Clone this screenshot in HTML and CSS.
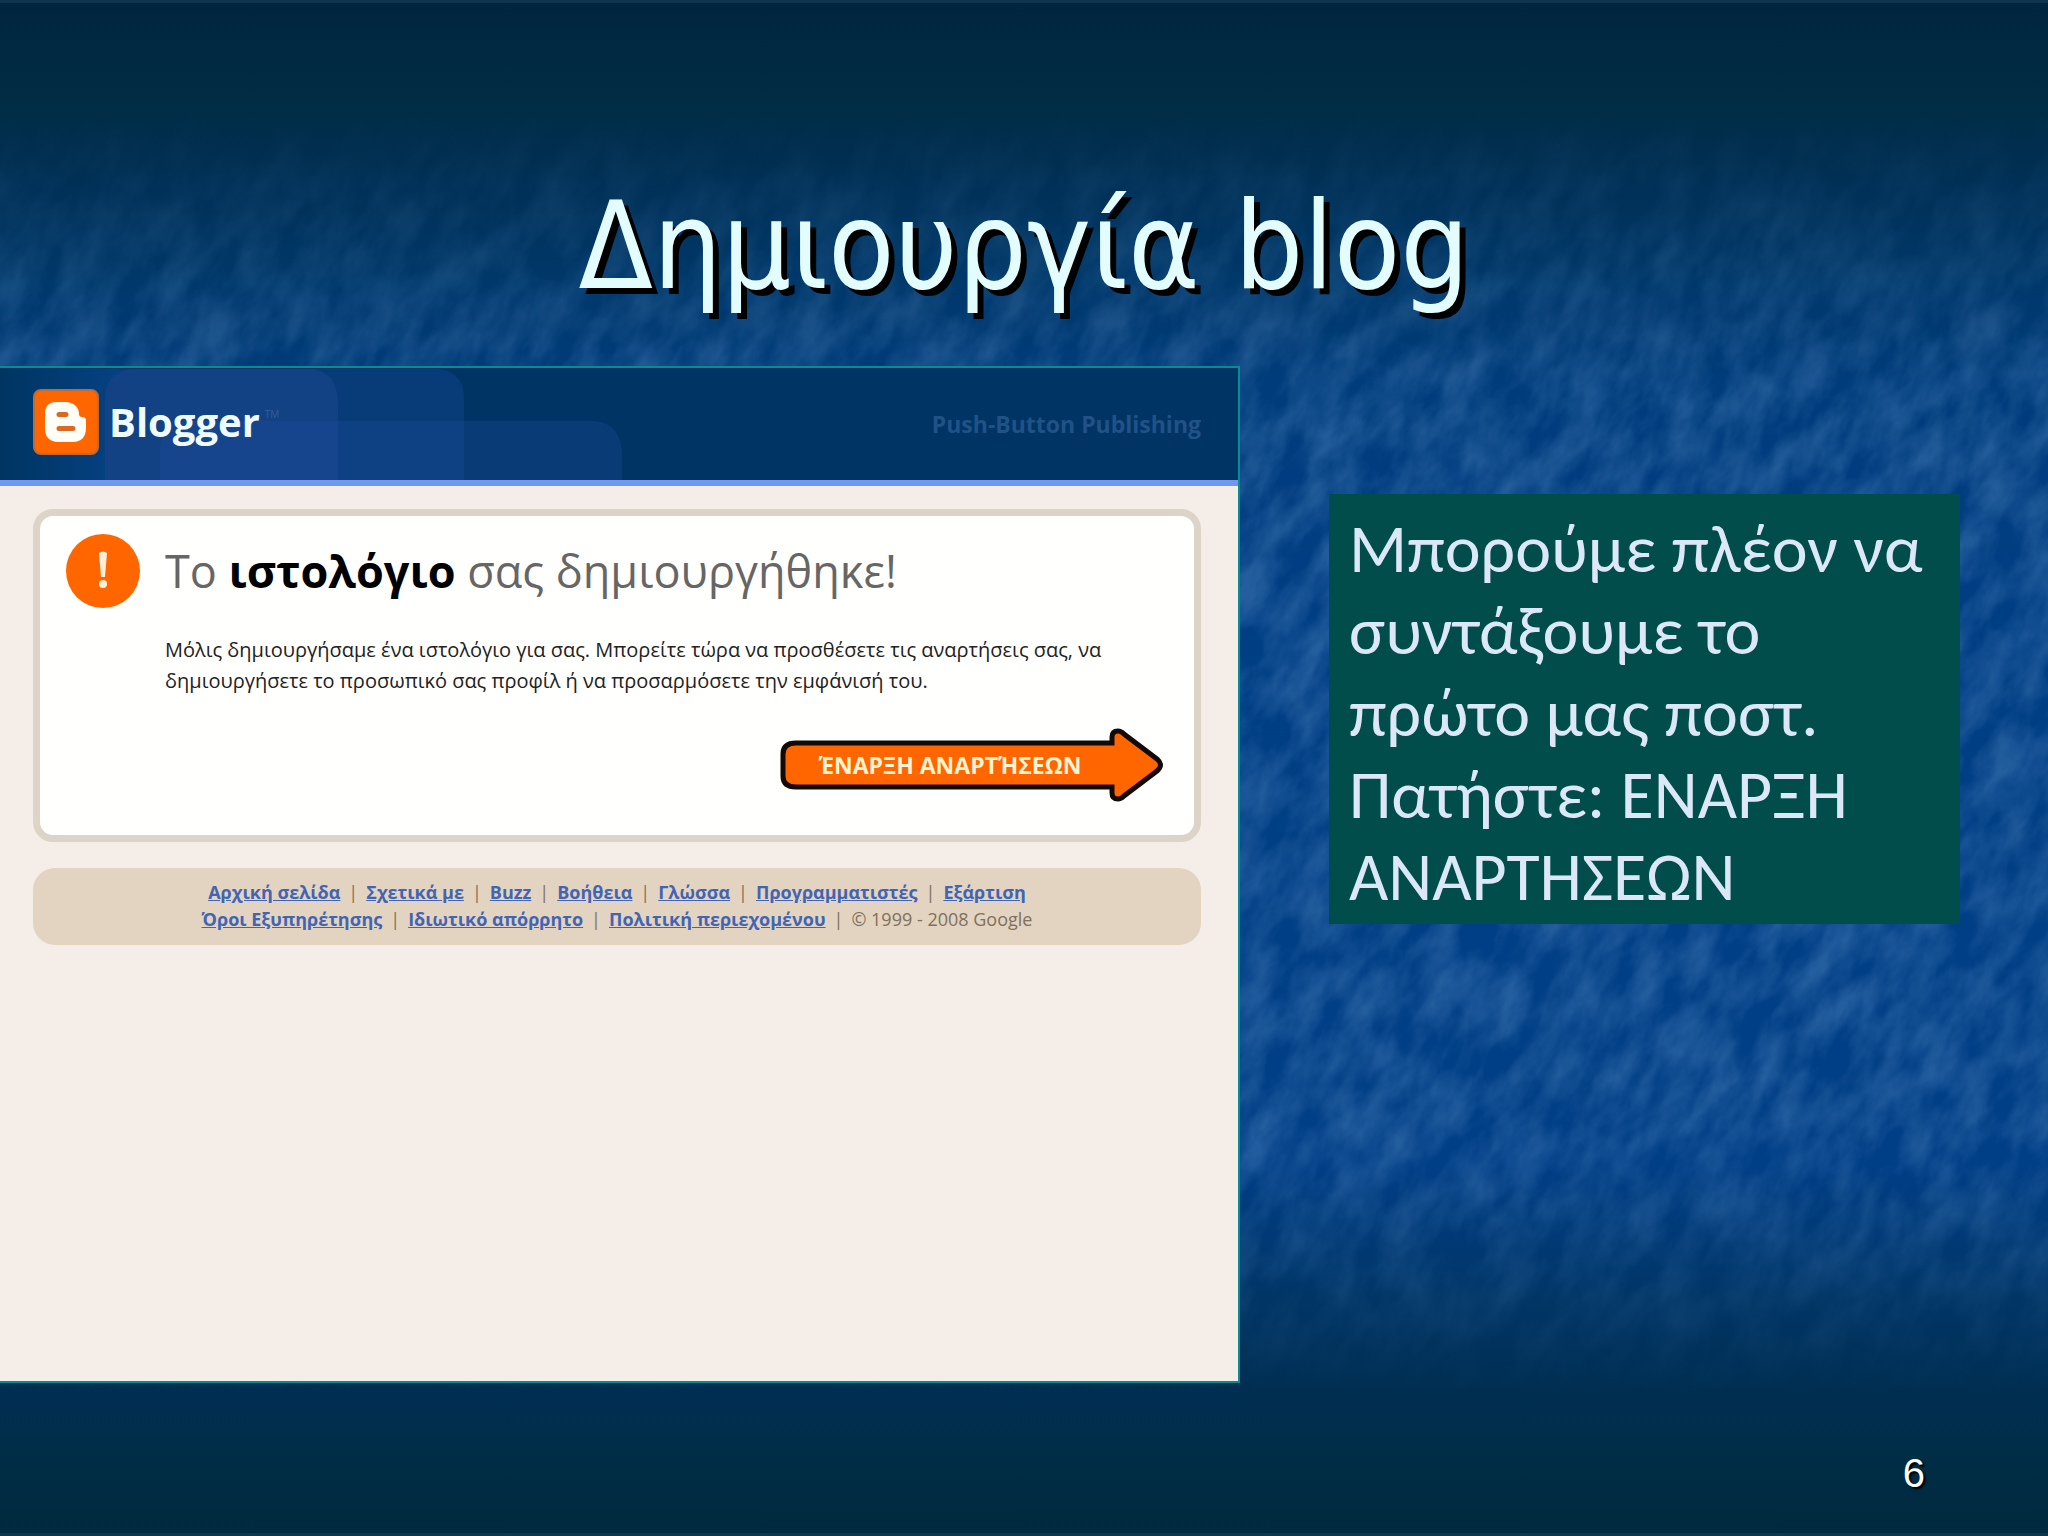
FILE: index.html
```
<!DOCTYPE html>
<html lang="el">
<head>
  <meta charset="UTF-8" />
  <meta name="viewport" content="width=device-width, initial-scale=1.0" />
  <title>Δημιουργία blog</title>
  <link rel="stylesheet" href="styles.css">
</head>
<body>
  <div class="slide">
    <svg class="texture" aria-hidden="true">
      <filter id="rock" x="0" y="0" width="100%" height="100%">
        <feTurbulence type="fractalNoise" baseFrequency="0.035 0.017" numOctaves="5" seed="7" />
        <feColorMatrix values="0 0 0 0 0.16  0 0 0 0 0.36  0 0 0 0 0.66  1.9 0 0 0 -0.55" />
      </filter>
      <rect x="-30%" y="-50%" width="160%" height="200%" filter="url(#rock)" transform="rotate(30 1024 768)" />
    </svg>

    <header class="titulo">
      <h1>Δημιουργία blog</h1>
    </header>

    <main class="contenido">
      <section class="ventana">
        <div class="barra">
          <svg class="formas" viewBox="0 0 640 111" aria-hidden="true">
            <defs>
              <linearGradient id="lado">
                <stop offset="0" stop-color="#003562" />
                <stop offset="1" stop-color="#064285" />
              </linearGradient>
            </defs>
            <rect width="130" height="111" fill="url(#lado)" />
            <path d="M120 0H440Q464 4 464 30V111H120Z" fill="#083c78" />
            <path d="M105 111V30Q105 4 130 0H315Q338 6 338 34V111Z" fill="#124184" />
            <path d="M160 111V80Q160 52 190 52H594Q622 54 622 88V111Z" fill="#1f50a5" opacity=".28" />
          </svg>
          <a class="logo" href="#">
            <svg width="66" height="66" viewBox="0 0 66 66" aria-hidden="true">
              <rect x="1" y="1" width="64" height="64" rx="7" fill="#ff6600" stroke="#bd6a38" stroke-width="2" />
              <path fill="#fffdf8" d="M23 13H32C41 13 46 18 46 25C46 27 47 28 49 28C52 28 53 29 53 32V39C53 48 48 53 40 53H25C17 53 12 48 12 40V25C12 17 16 13 23 13Z" />
              <path d="M26 25.500H33M26 39.500H40" stroke="#d96a24" stroke-width="5" stroke-linecap="round" />
            </svg>
            <span class="marca">Blogger</span><span class="tm">TM</span>
          </a>
          <span class="lema">Push-Button Publishing</span>
        </div>

        <div class="caja">
          <svg class="aviso" width="74" height="74" viewBox="0 0 74 74" aria-hidden="true">
            <circle cx="37" cy="37" r="37" fill="#ff6600" />
            <path d="M33 19Q37 16 41 19L39 43H35Z" fill="#ffeed8" />
            <circle cx="37" cy="50" r="4" fill="#ffeed8" />
          </svg>
          <div class="texto">
            <h2>Το <strong>ιστολόγιο</strong> σας δημιουργήθηκε!</h2>
            <p>Μόλις δημιουργήσαμε ένα ιστολόγιο για σας. Μπορείτε τώρα να προσθέσετε τις αναρτήσεις σας, να δημιουργήσετε το προσωπικό σας προφίλ ή να προσαρμόσετε την εμφάνισή του.</p>
          </div>
          <button class="flecha" type="button">
            <svg viewBox="0 0 384 74" aria-hidden="true">
              <path d="M16 15H332V9Q332 3 338 3Q341 3 344 6L377 31Q384 37 377 43L344 68Q341 71 338 71Q332 71 332 65V59H16Q3 59 3 48V26Q3 15 16 15Z" fill="#ff6600" stroke="#120a08" stroke-width="5" />
            </svg>
            <span>ΈΝΑΡΞΗ ΑΝΑΡΤΉΣΕΩΝ</span>
          </button>
        </div>

        <footer class="pie">
          <div>
            <a href="#">Αρχική σελίδα</a><i>|</i><a href="#">Σχετικά με</a><i>|</i><a href="#">Buzz</a><i>|</i><a href="#">Βοήθεια</a><i>|</i><a href="#">Γλώσσα</a><i>|</i><a href="#">Προγραμματιστές</a><i>|</i><a href="#">Εξάρτιση</a>
          </div>
          <div>
            <a href="#">Όροι Εξυπηρέτησης</a><i>|</i><a href="#">Ιδιωτικό απόρρητο</a><i>|</i><a href="#">Πολιτική περιεχομένου</a><i>|</i>© 1999 - 2008 Google
          </div>
        </footer>
      </section>

      <p class="nota">Μπορούμε πλέον να συντάξουμε το<br>πρώτο μας ποστ.<br>Πατήστε: ΕΝΑΡΞΗ ΑΝΑΡΤΗΣΕΩΝ</p>
    </main>

    <div class="numero">6</div>
  </div>
</body>
</html>
```

FILE: styles.css
```
* { box-sizing: border-box; }
body { margin: 0; font-family: "Open Sans", "Noto Sans", sans-serif; background: #002d4e; }
.slide {
  position: relative; overflow: hidden; isolation: isolate;
  min-height: 100vh; display: flex; flex-direction: column;
  border: 3px solid #10364f; border-width: 3px 0;
  background: linear-gradient(#00263f 0%, #012c43 6%, #002e50 10%, #00386a 18%, #003c7c 25%, #003e84 40%, #003e86 76%, #003565 85%, #002e51 91%, #002d44 96%, #00293f 100%);
}
.texture {
  position: absolute; inset: 0; width: 100%; height: 100%; z-index: -1; opacity: 0.32;
  -webkit-mask-image: linear-gradient(transparent 7%, #0006 15%, #000 26%, #000 74%, transparent 91%);
  mask-image: linear-gradient(transparent 7%, #0006 15%, #000 26%, #000 74%, transparent 91%);
}
.titulo { text-align: center; padding-top: 158px; height: 363px; }
h1 {
  margin: 0; color: #e3fdff; font: 400 121px/172px "DejaVu Sans Condensed", "DejaVu Sans", sans-serif;
  text-shadow: 6px 6px 0 #000;
}
.contenido {
  display: grid; grid-template-columns: 1240fr 631fr; column-gap: 89px;
  padding-right: 88px; align-items: start;
}

/* ventana de Blogger */
.ventana {
  min-height: 1017px; background: #f5ede8;
  border: 2px solid #078b95; border-left: 0;
}
.barra {
  position: relative; display: flex; align-items: center; justify-content: space-between;
  height: 118px; padding: 0 37px 4px 33px;
  background: #003464; border-bottom: 6px solid #7197ee;
}
.formas { position: absolute; left: 0; bottom: 0; height: 111px; }
.logo { position: relative; display: flex; align-items: center; text-decoration: none; color: #effcff; }
.marca { margin-left: 10px; font-size: 40px; line-height: 48px; font-weight: 700; }
.tm { align-self: flex-start; margin: 18px 0 0 5px; font-size: 10px; color: #335f9d; }
.lema { margin-top: 4px; color: #205287; font-size: 23px; font-weight: 700; }
.caja {
  display: grid; grid-template-columns: 74px 1fr; column-gap: 25px;
  margin: 23px 37px 26px 33px; padding: 18px 30px 33px 26px; min-height: 333px;
  background: #fffffd; border: 7px solid #ddd4c8; border-radius: 20px;
}
h2 { margin: 6px 0 32px; color: #666; font-size: 45px; line-height: 62px; font-weight: 400; }
h2 strong { color: #000; }
.texto p { margin: 0 40px 0 0; font-size: 20px; line-height: 31px; color: #222; }
.flecha {
  grid-column: 1 / -1; justify-self: end; align-self: end;
  position: relative; width: 384px; height: 74px; padding: 0 82px 0 38px;
  border: 0; background: none; cursor: pointer;
  color: #fff3d0; font: 700 23px/24px "Open Sans", "Noto Sans", sans-serif; white-space: nowrap;
}
.flecha svg { position: absolute; inset: 0; }
.flecha span { position: relative; }
.pie {
  margin: 0 37px 0 33px; padding: 11px 20px 12px; border-radius: 22px;
  background: #e2d4c1; color: #80705c;
  font-size: 18px; line-height: 27px; text-align: center; white-space: nowrap;
}
.pie a { color: #4264b3; font-weight: 700; }
.pie i { font-style: normal; margin: 0 8px; }

.nota {
  margin: 128px 0 0; padding: 14px 20px 6px 20px; min-height: 430px;
  background: #004d4b; color: #dce8f8; font: 400 68px/82px Carlito, Lato, sans-serif;
}
.numero {
  margin-top: auto; padding: 0 123px 36px 0; text-align: right;
  color: #fff; font: 40px/48px "Liberation Sans", Arial, sans-serif; text-shadow: 2px 2px 2px #000;
}
```
